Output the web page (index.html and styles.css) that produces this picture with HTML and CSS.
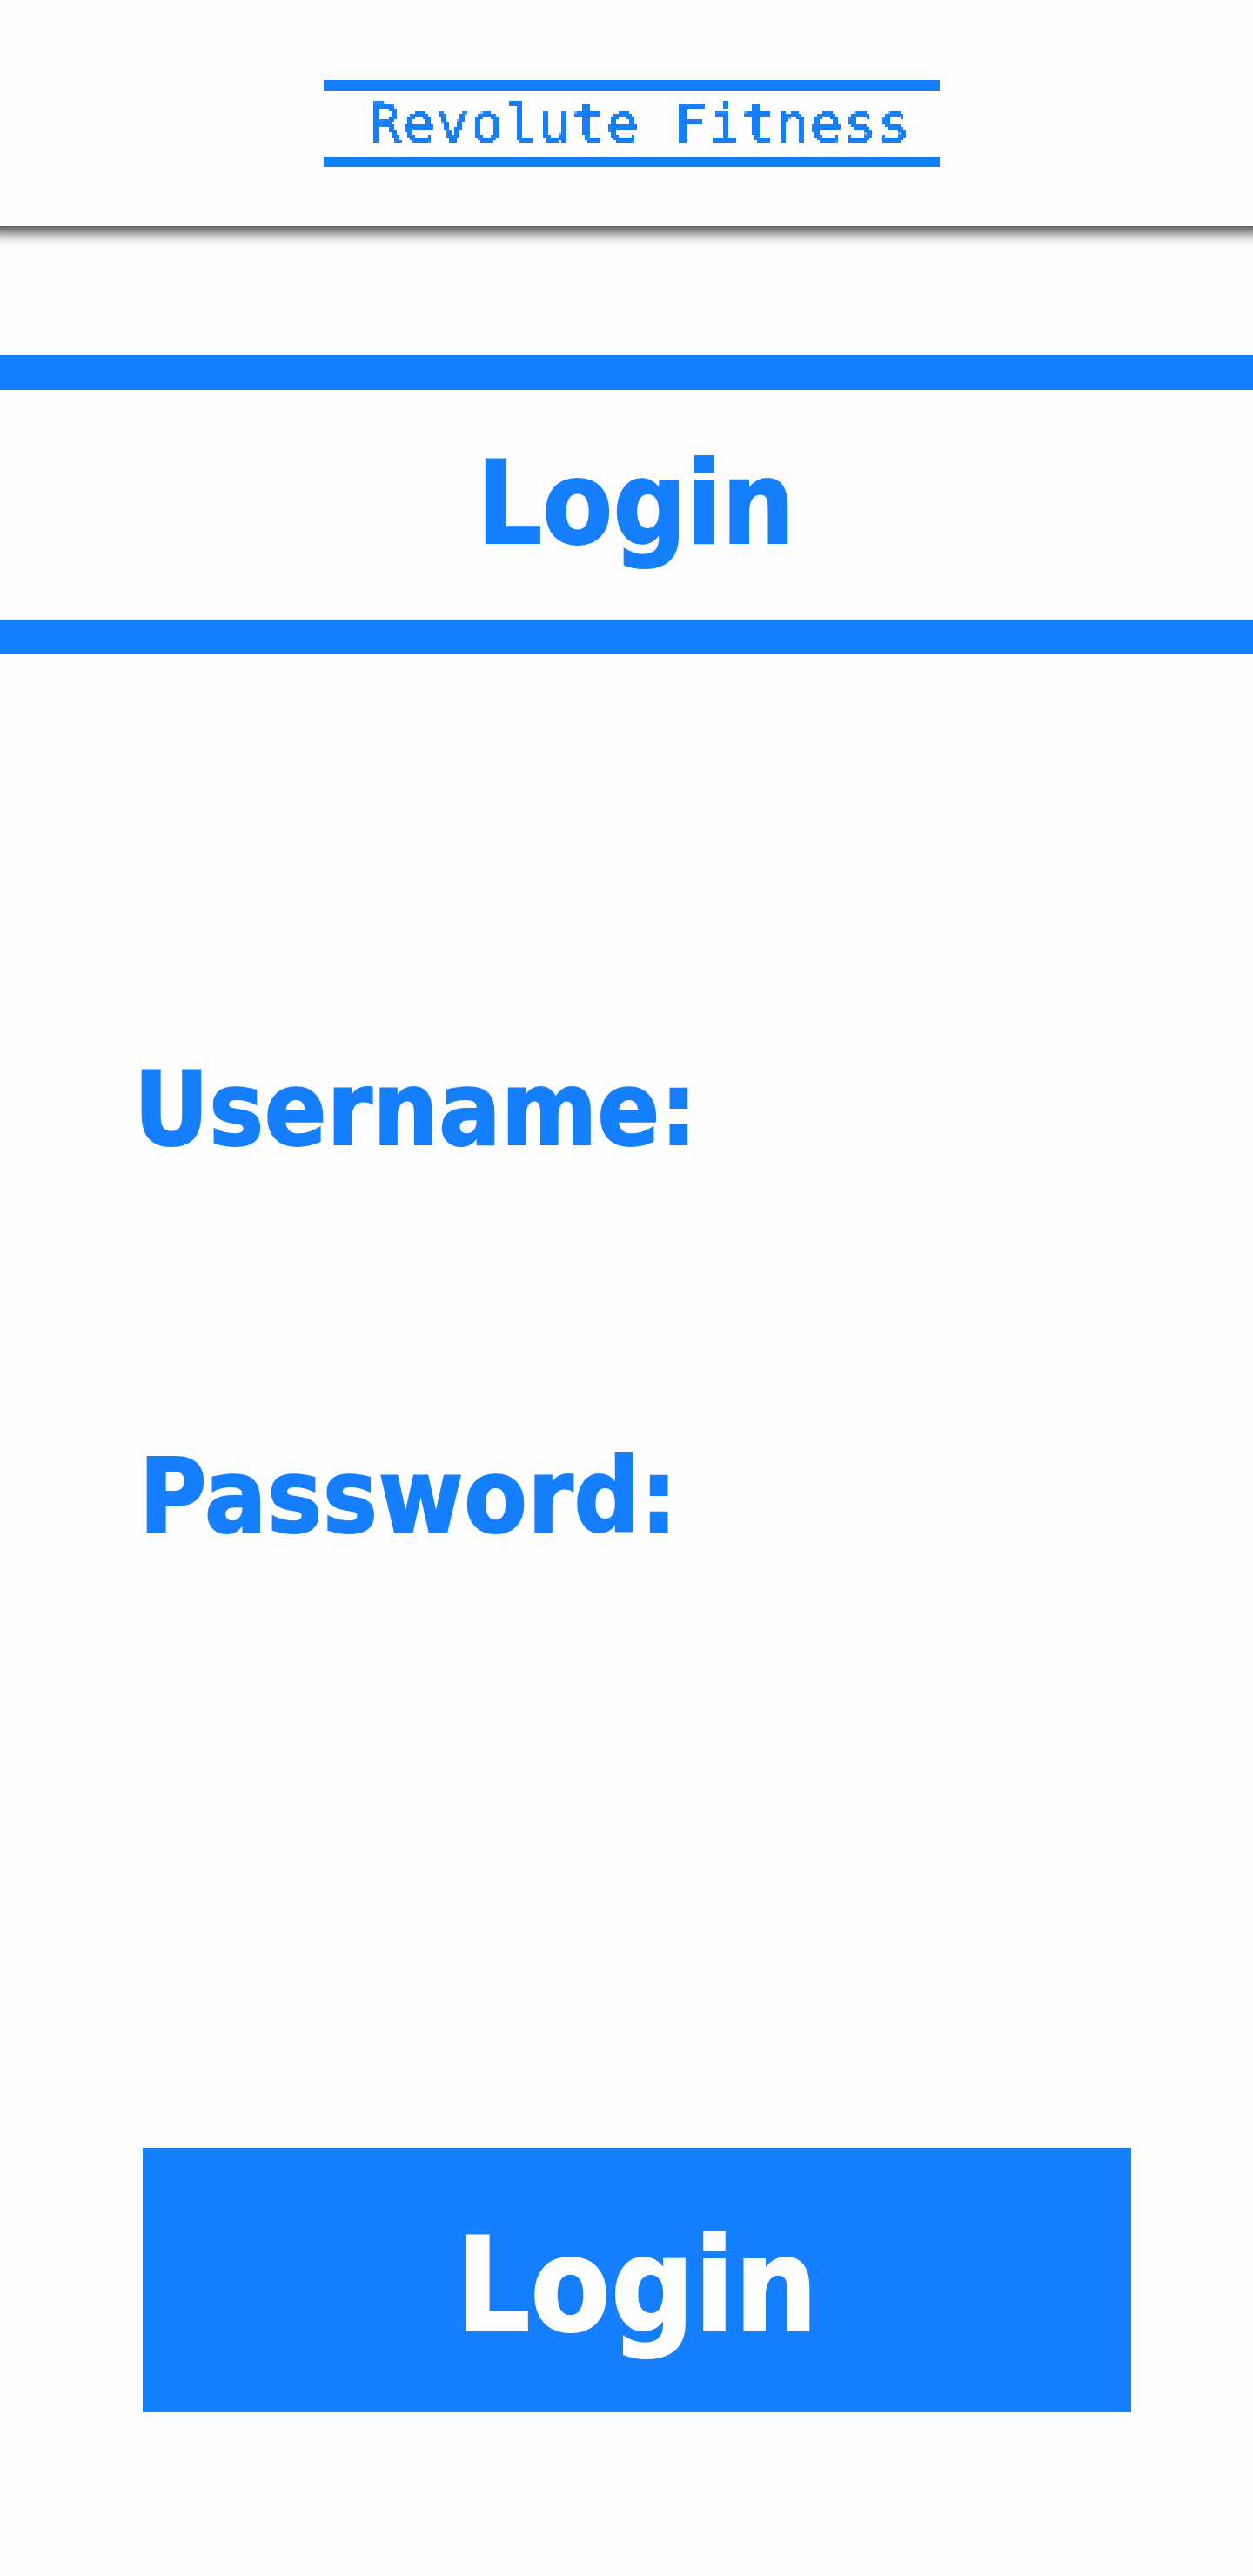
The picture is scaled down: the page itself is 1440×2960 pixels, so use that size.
FILE: index.html
```html
<!DOCTYPE html>
<html lang="en">
<head>
<meta charset="utf-8">
<title>Revolute Fitness – Login</title>
<link rel="stylesheet" href="styles.css">
</head>
<body>
<!-- Snaps the brand lettering to a 3px grid -->
<svg class="defs" width="0" height="0" aria-hidden="true">
  <filter id="pixel" filterUnits="userSpaceOnUse" primitiveUnits="userSpaceOnUse" x="0" y="0" width="708" height="84" color-interpolation-filters="sRGB">
    <feFlood x="1" y="1" width="1" height="1" flood-color="#000" result="dot"/>
    <feOffset in="dot" x="0" y="0" width="3" height="3" dx="0" dy="0" result="cell"/>
    <feTile in="cell" result="grid"/>
    <feComposite in="SourceGraphic" in2="grid" operator="in"/>
    <feMorphology operator="dilate" radius="1"/>
    <feComponentTransfer><feFuncA type="linear" slope="6" intercept="-2.2"/></feComponentTransfer>
  </filter>
</svg>
<header class="header">
  <div class="brand"><span class="brand-name">Revolute Fitness</span></div>
</header>
<main>
  <h1 class="title">Login</h1>
  <form class="form">
    <label class="label username">Username:</label>
    <label class="label password">Password:</label>
    <button class="submit" type="button">Login</button>
  </form>
</main>
</body>
</html>
```
FILE: styles.css
```css
* { box-sizing: border-box; }
body {
  margin: 0;
  width: 1440px;
  height: 2960px;
  overflow: hidden;
  background: #fefefe;
  color: #157ffd;
  font-family: "DejaVu Sans Condensed", "DejaVu Sans", sans-serif;
  font-stretch: condensed;
  font-weight: bold;
  -webkit-text-stroke: 2px currentColor;
}
.defs { position: absolute; }
.header {
  height: 260px;
  padding: 92px 0 0 372px;
  background: #fefefe;
  box-shadow: 0 -10px 16px 16px rgba(0, 0, 0, .8);
}
.brand {
  width: 708px;
  height: 100px;
  border: solid #157ffd;
  border-width: 12px 0;
}
.brand-name {
  display: block;
  height: 76px;
  padding-left: 52px;
  font: 400 61px/76px "DejaVu Sans Mono", monospace;
  letter-spacing: 2.28px;
  white-space: pre;
  -webkit-text-stroke: 1px currentColor;
  filter: url(#pixel);
}
.title {
  margin: 148px 0 0;
  height: 344px;
  padding-left: 548px;
  border: solid #157ffd;
  border-width: 40px 0;
  font-size: 131px;
  line-height: 262px;
  letter-spacing: .2px;
}
.form { display: flex; flex-direction: column; }
.label {
  height: 140px;
  font-size: 117.5px;
  line-height: 140px;
  letter-spacing: .45px;
}
.username { margin: 453px 0 0 154px; }
.password { margin: 305px 0 0 160px; letter-spacing: .8px; }
.submit {
  width: 1136px;
  height: 304px;
  margin: 678px 0 0 164px;
  padding: 14px 0 0 360px;
  border: 0;
  background: #157ffd;
  color: #fefefe;
  font: inherit;
  font-size: 149px;
  line-height: 290px;
  letter-spacing: .2px;
  text-align: left;
}
```
